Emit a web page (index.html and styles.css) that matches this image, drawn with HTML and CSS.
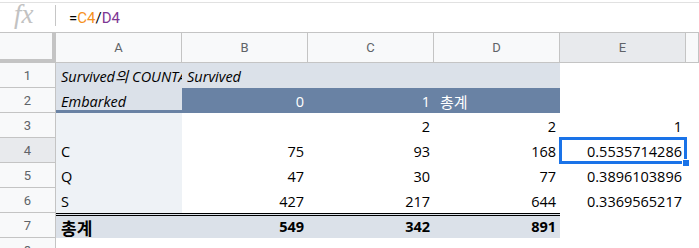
FILE: index.html
```html
<!DOCTYPE html>
<html lang="ko">
<head>
    <meta charset="UTF-8">
    <title>Pivot Sheet</title>
    <link rel="stylesheet" href="styles.css">
</head>
<body>

<!-- Formula Bar -->
<div class="formula-bar">
    <span class="fx">fx</span>
    <span class="divider"></span>
    <span class="formula">=<span class="ref-c">C4</span>/<span class="ref-d">D4</span></span>
</div>

<!-- Grid -->
<div class="sheet">
    <div class="corner"></div>
    <div class="col-head">A</div>
    <div class="col-head">B</div>
    <div class="col-head">C</div>
    <div class="col-head">D</div>
    <div class="col-head active">E</div>
    <div class="col-head"></div>

    <div class="row-head">1</div>
    <div class="cell title italic clip">Survived의 COUNTA</div>
    <div class="cell title italic">Survived</div>
    <div class="cell title"></div>
    <div class="cell title"></div>
    <div class="cell"></div>
    <div class="cell"></div>

    <div class="row-head">2</div>
    <div class="cell title italic label-row">Embarked</div>
    <div class="cell dark num">0</div>
    <div class="cell dark num">1</div>
    <div class="cell dark kr">총계</div>
    <div class="cell"></div>
    <div class="cell"></div>

    <div class="row-head">3</div>
    <div class="cell pale"></div>
    <div class="cell"></div>
    <div class="cell num">2</div>
    <div class="cell num">2</div>
    <div class="cell num">1</div>
    <div class="cell"></div>

    <div class="row-head active">4</div>
    <div class="cell pale">C</div>
    <div class="cell num">75</div>
    <div class="cell num">93</div>
    <div class="cell num">168</div>
    <div class="cell num selected">0.5535714286<span class="frame"></span><span class="handle"></span></div>
    <div class="cell"></div>

    <div class="row-head">5</div>
    <div class="cell pale">Q</div>
    <div class="cell num">47</div>
    <div class="cell num">30</div>
    <div class="cell num">77</div>
    <div class="cell num">0.3896103896</div>
    <div class="cell"></div>

    <div class="row-head">6</div>
    <div class="cell pale">S</div>
    <div class="cell num">427</div>
    <div class="cell num">217</div>
    <div class="cell num">644</div>
    <div class="cell num">0.3369565217</div>
    <div class="cell"></div>

    <div class="row-head">7</div>
    <div class="cell total kr-total">총계</div>
    <div class="cell total num">549</div>
    <div class="cell total num">342</div>
    <div class="cell total num">891</div>
    <div class="cell"></div>
    <div class="cell"></div>

    <div class="row-head">8</div>
    <div class="cell"></div>
    <div class="cell"></div>
    <div class="cell"></div>
    <div class="cell"></div>
    <div class="cell"></div>
    <div class="cell"></div>
</div>

</body>
</html>
```

FILE: styles.css
```css
/* Global */
body {
    margin: 0;
    padding-top: 2px;
    background: #fff;
    font-family: 'Open Sans', 'Noto Sans CJK KR', sans-serif;
    color: #000;
    overflow: hidden;
    height: 248px;
}

/* Formula Bar */
.formula-bar {
    display: flex;
    align-items: center;
    height: 29px;
    border-top: 1px solid #e1e1e1;
}

.fx {
    width: 41px;
    padding-left: 14px;
    font-family: 'Liberation Serif', serif;
    font-style: italic;
    font-size: 27px;
    color: #c2c2c2;
    line-height: 1;
    margin-top: -7px;
}

.divider {
    width: 1px;
    height: 21px;
    background: #c6c6c6;
    margin-top: -5px;
}

.formula {
    margin-left: 13px;
    font-family: Roboto, sans-serif;
    font-size: 15px;
    color: #000;
}

.ref-c { color: #f6921e; }
.ref-d { color: #7e3794; }

/* Grid */
.sheet {
    display: grid;
    grid-template-columns: 56px repeat(5, 126px) 1fr;
    grid-template-rows: 30px repeat(7, 25px) 25px;
    border-top: 1px solid #c4c4c4;
}

.corner {
    background: #f8f9fa;
    border-right: 4px solid #c4c4c4;
    border-bottom: 4px solid #c4c4c4;
    box-sizing: border-box;
}

.col-head {
    background: #f8f9fa;
    border-right: 1px solid #c4c4c4;
    border-bottom: 1px solid #c4c4c4;
    box-sizing: border-box;
    display: flex;
    align-items: center;
    justify-content: center;
    font-family: Roboto, sans-serif;
    font-size: 13px;
    color: #5f6368;
}

.col-head.active,
.row-head.active {
    background: #e8eaed;
}

.row-head {
    background: #f8f9fa;
    border-right: 1px solid #c4c4c4;
    border-bottom: 1px solid #c4c4c4;
    box-sizing: border-box;
    display: flex;
    align-items: center;
    justify-content: center;
    font-family: Roboto, sans-serif;
    font-size: 13px;
    color: #5f6368;
}

/* Cells */
.cell {
    display: flex;
    align-items: flex-end;
    padding: 0 4px 2px 5px;
    font-size: 14.5px;
    line-height: 19px;
    white-space: nowrap;
    box-sizing: border-box;
    min-width: 0;
}

.cell.num {
    justify-content: flex-end;
}

.italic {
    font-style: italic;
}

.clip {
    overflow: hidden;
}

.title {
    background: #dbe1e9;
}

.label-row {
    box-shadow: inset 0 -3px 0 #6982a4;
}

.dark {
    background: #6982a4;
    color: #fff;
}

.kr {
    font-family: 'Noto Sans CJK KR', sans-serif;
    font-size: 15px;
    padding-left: 6px;
}

.pale {
    background: #eef2f6;
}

.total {
    background: #dbe1e9;
    border-top: 3px double #000;
    font-weight: 700;
}

.kr-total {
    font-family: 'Noto Sans CJK KR', sans-serif;
    font-size: 17px;
    padding-bottom: 1px;
}

.selected {
    position: relative;
}

.frame {
    position: absolute;
    top: -1px;
    left: -1px;
    right: -1px;
    bottom: -1px;
    border: 3px solid #1a73e8;
}

.handle {
    position: absolute;
    right: -4px;
    bottom: -4px;
    width: 8px;
    height: 8px;
    background: #1a73e8;
    border: 1px solid #fff;
    box-sizing: border-box;
}
```
